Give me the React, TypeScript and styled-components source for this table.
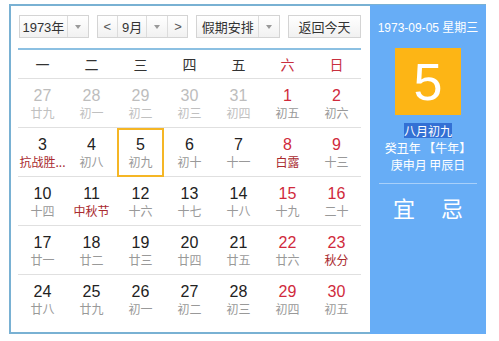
import styled, { createGlobalStyle } from 'styled-components';

const GlobalStyle = createGlobalStyle`
    body {
        margin: 0;
        background: #fff;
        font-family: "Liberation Sans", "Noto Sans CJK SC", sans-serif;
    }
`;

type Kind = 'other' | 'normal' | 'weekend';

interface Day {
    num: number
    lunar: string
    kind: Kind
    fest?: boolean
    selected?: boolean
}

const weekdays = ['一', '二', '三', '四', '五', '六', '日'];

const rows: Day[][] = [
    [
        { num: 27, lunar: '廿九', kind: 'other' },
        { num: 28, lunar: '初一', kind: 'other' },
        { num: 29, lunar: '初二', kind: 'other' },
        { num: 30, lunar: '初三', kind: 'other' },
        { num: 31, lunar: '初四', kind: 'other' },
        { num: 1, lunar: '初五', kind: 'weekend' },
        { num: 2, lunar: '初六', kind: 'weekend' },
    ],
    [
        { num: 3, lunar: '抗战胜利纪念日', kind: 'normal', fest: true },
        { num: 4, lunar: '初八', kind: 'normal' },
        { num: 5, lunar: '初九', kind: 'normal', selected: true },
        { num: 6, lunar: '初十', kind: 'normal' },
        { num: 7, lunar: '十一', kind: 'normal' },
        { num: 8, lunar: '白露', kind: 'weekend', fest: true },
        { num: 9, lunar: '十三', kind: 'weekend' },
    ],
    [
        { num: 10, lunar: '十四', kind: 'normal' },
        { num: 11, lunar: '中秋节', kind: 'normal', fest: true },
        { num: 12, lunar: '十六', kind: 'normal' },
        { num: 13, lunar: '十七', kind: 'normal' },
        { num: 14, lunar: '十八', kind: 'normal' },
        { num: 15, lunar: '十九', kind: 'weekend' },
        { num: 16, lunar: '二十', kind: 'weekend' },
    ],
    [
        { num: 17, lunar: '廿一', kind: 'normal' },
        { num: 18, lunar: '廿二', kind: 'normal' },
        { num: 19, lunar: '廿三', kind: 'normal' },
        { num: 20, lunar: '廿四', kind: 'normal' },
        { num: 21, lunar: '廿五', kind: 'normal' },
        { num: 22, lunar: '廿六', kind: 'weekend' },
        { num: 23, lunar: '秋分', kind: 'weekend', fest: true },
    ],
    [
        { num: 24, lunar: '廿八', kind: 'normal' },
        { num: 25, lunar: '廿九', kind: 'normal' },
        { num: 26, lunar: '初一', kind: 'normal' },
        { num: 27, lunar: '初二', kind: 'normal' },
        { num: 28, lunar: '初三', kind: 'normal' },
        { num: 29, lunar: '初四', kind: 'weekend' },
        { num: 30, lunar: '初五', kind: 'weekend' },
    ],
];

export default function App(): JSX.Element {
    return (
        <>
            <GlobalStyle />
            <Frame>
                <Main>
                    <Toolbar>
                        <SelectBox $width={70}>
                            <SelectText>1973年</SelectText>
                            <ArrowPart><Caret /></ArrowPart>
                        </SelectBox>
                        <SelectBox $width={92}>
                            <StepButton>&lt;</StepButton>
                            <SelectText>9月</SelectText>
                            <ArrowPart><Caret /></ArrowPart>
                            <StepButton $right>&gt;</StepButton>
                        </SelectBox>
                        <SelectBox $width={84}>
                            <SelectText>假期安排</SelectText>
                            <ArrowPart><Caret /></ArrowPart>
                        </SelectBox>
                        <TodayButton>返回今天</TodayButton>
                    </Toolbar>
                    <Grid>
                        <WeekRow>
                            {weekdays.map((w, i) => (
                                <WeekCell key={w} $red={i >= 5}>{w}</WeekCell>
                            ))}
                        </WeekRow>
                        {rows.map((row, r) => (
                            <DayRow key={r} $last={r === rows.length - 1}>
                                {row.map((d, i) => (
                                    <DayCell key={i} $selected={d.selected}>
                                        <DayNum $kind={d.kind}>{d.num}</DayNum>
                                        <Lunar $kind={d.kind} $fest={d.fest}>
                                            {d.lunar.length > 4 ? d.lunar.slice(0, 3) + '...' : d.lunar}
                                        </Lunar>
                                    </DayCell>
                                ))}
                            </DayRow>
                        ))}
                    </Grid>
                </Main>
                <Side>
                    <SideDate>1973-09-05 星期三</SideDate>
                    <BigDay>5</BigDay>
                    <SideInfo>
                        <Selected>八月初九</Selected>
                        <span>癸丑年 【牛年】</span>
                        <span>庚申月 甲辰日</span>
                    </SideInfo>
                    <SideDivider />
                    <YiJi>
                        <span>宜</span>
                        <span>忌</span>
                    </YiJi>
                </Side>
            </Frame>
        </>
    );
}

const Frame = styled.div`
    margin: 4px 0 0 9px;
    width: 477px;
    height: 330px;
    box-sizing: border-box;
    border: 2px solid #79b1d3;
    border-right: none;
    display: flex;
`;

const Main = styled.div`
    width: 359px;
    padding: 9px 9px 0 7px;
    box-sizing: border-box;
    display: flex;
    flex-direction: column;
`;

const Toolbar = styled.div`
    display: flex;
    gap: 8px;
    padding-left: 1px;
    height: 23px;
`;

const SelectBox = styled.div<{ $width: number }>`
    width: ${(p) => p.$width}px;
    box-sizing: border-box;
    border: 1px solid #d4d4d4;
    background: linear-gradient(#ffffff, #f1f1f1);
    display: flex;
    align-items: stretch;
    font-family: "Liberation Sans", "Noto Sans CJK SC", sans-serif;
    font-size: 13px;
    color: #333;
`;

const SelectText = styled.div`
    flex: 1;
    display: flex;
    align-items: center;
    justify-content: center;
`;

const ArrowPart = styled.div`
    width: 20px;
    border-left: 1px solid #dcdcdc;
    display: flex;
    align-items: center;
    justify-content: center;
`;

const Caret = styled.span`
    width: 0;
    height: 0;
    border-left: 3px solid transparent;
    border-right: 3px solid transparent;
    border-top: 4px solid #999;
`;

const StepButton = styled.div<{ $right?: boolean }>`
    width: 19px;
    display: flex;
    align-items: center;
    justify-content: center;
    color: #555;
    font-size: 13px;
    ${(p) => (p.$right ? 'border-left: 1px solid #dcdcdc;' : 'border-right: 1px solid #dcdcdc;')}
`;

const TodayButton = styled.div`
    width: 73px;
    box-sizing: border-box;
    border: 1px solid #d4d4d4;
    background: linear-gradient(#ffffff, #f1f1f1);
    display: flex;
    align-items: center;
    justify-content: center;
    font-family: "Noto Sans CJK SC", sans-serif;
    font-size: 13px;
    color: #333;
`;

const Grid = styled.div`
    margin-top: 10px;
    border-top: 2px solid #8cc0e2;
    width: 343px;
`;

const WeekRow = styled.div`
    display: grid;
    grid-template-columns: repeat(7, 49px);
    height: 28px;
    border-bottom: 1px solid #e0e0e0;
`;

const WeekCell = styled.div<{ $red: boolean }>`
    display: flex;
    align-items: center;
    justify-content: center;
    font-family: "Noto Sans CJK SC", sans-serif;
    font-size: 14px;
    color: ${(p) => (p.$red ? '#c8303f' : '#333')};
`;

const DayRow = styled.div<{ $last: boolean }>`
    display: grid;
    grid-template-columns: repeat(7, 49px);
    height: 48px;
    border-bottom: 1px solid ${(p) => (p.$last ? 'transparent' : '#e0e0e0')};
`;

const DayCell = styled.div<{ $selected?: boolean }>`
    display: flex;
    flex-direction: column;
    align-items: center;
    padding-top: 8px;
    box-sizing: border-box;
    height: 49px;
    margin: 0 1px;
    border: 2px solid ${(p) => (p.$selected ? '#f5b625' : 'transparent')};
    padding-top: 6px;
    margin-top: ${(p) => (p.$selected ? '0' : '0')};
`;

const numColor: Record<Kind, string> = {
    other: '#bdbdbd',
    normal: '#222',
    weekend: '#d02a3c',
};

const DayNum = styled.div<{ $kind: Kind }>`
    font-family: "Liberation Sans", Arial, sans-serif;
    font-size: 16px;
    line-height: 18px;
    color: ${(p) => numColor[p.$kind]};
`;

const Lunar = styled.div<{ $kind: Kind; $fest?: boolean }>`
    font-family: "Noto Sans CJK SC", sans-serif;
    font-size: 12px;
    line-height: 16px;
    white-space: nowrap;
    color: ${(p) => (p.$fest ? '#a92a2e' : p.$kind === 'other' ? '#c0c0c0' : '#999')};
`;

const Side = styled.div`
    width: 116px;
    margin-top: -1px;
    margin-bottom: -2px;
    background: #67adf6;
    display: flex;
    flex-direction: column;
    align-items: center;
    color: #fff;
    font-family: "Noto Sans CJK SC", sans-serif;
`;

const SideDate = styled.div`
    margin-top: 15px;
    font-family: "Liberation Sans", "Noto Sans CJK SC", sans-serif;
    font-size: 12px;
    line-height: 16px;
`;

const BigDay = styled.div`
    margin-top: 12px;
    width: 66px;
    height: 67px;
    background: #fdb515;
    display: flex;
    align-items: center;
    justify-content: center;
    font-family: "Liberation Sans", Arial, sans-serif;
    font-size: 52px;
`;

const SideInfo = styled.div`
    margin-top: 7px;
    display: flex;
    flex-direction: column;
    align-items: center;
    font-size: 12px;
    line-height: 17px;
`;

const Selected = styled.span`
    background: #3370d4;
    line-height: 15px;
    margin: 1px 0;
`;

const SideDivider = styled.div`
    margin-top: 10px;
    width: 98px;
    height: 1px;
    background: #a8d0fa;
`;

const YiJi = styled.div`
    margin-top: 10px;
    width: 100%;
    display: flex;
    justify-content: space-around;
    padding: 0 10px;
    box-sizing: border-box;
    font-size: 22px;
    line-height: 26px;
`;
